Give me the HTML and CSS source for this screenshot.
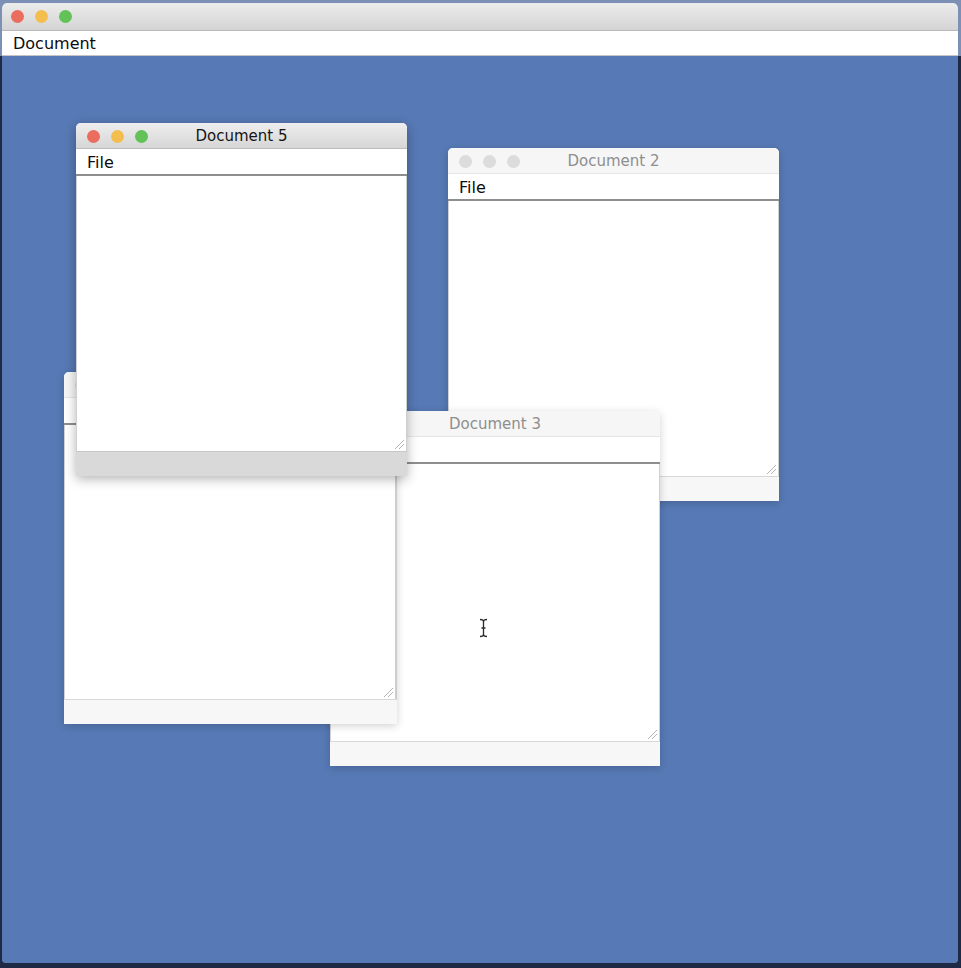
FILE: index.html
```html
<!DOCTYPE html>
<html>
<head>
<meta charset="utf-8">
<link rel="stylesheet" href="styles.css">
</head>
<body>
<div class="app">
  <div class="app-titlebar">
    <span class="light red"></span><span class="light yellow"></span><span class="light green"></span>
  </div>
  <div class="app-menubar"><span class="menu-item">Document</span></div>
  <div class="desktop">
    <div class="win win-doc2 inactive">
      <div class="titlebar">
        <div class="lights"><span class="light"></span><span class="light"></span><span class="light"></span></div>
        <div class="title">Document 2</div>
        <div></div>
      </div>
      <div class="menubar">File</div>
      <div class="content">
        <svg class="grip" width="11" height="11" viewBox="0 0 11 11"><path d="M1 10 L10 1 M5 10 L10 5" stroke="#b5b5b5" stroke-width="1"/></svg>
      </div>
      <div class="statusbar"></div>
    </div>

    <div class="win win-doc3 inactive">
      <div class="titlebar">
        <div class="lights"><span class="light"></span><span class="light"></span><span class="light"></span></div>
        <div class="title">Document 3</div>
        <div></div>
      </div>
      <div class="menubar">File</div>
      <div class="content">
        <svg class="grip" width="11" height="11" viewBox="0 0 11 11"><path d="M1 10 L10 1 M5 10 L10 5" stroke="#b5b5b5" stroke-width="1"/></svg>
      </div>
      <div class="statusbar"></div>
    </div>

    <div class="win win-doc4 inactive">
      <div class="titlebar">
        <div class="lights"><span class="light"></span><span class="light"></span><span class="light"></span></div>
        <div class="title">Document 4</div>
        <div></div>
      </div>
      <div class="menubar">File</div>
      <div class="content">
        <svg class="grip" width="11" height="11" viewBox="0 0 11 11"><path d="M1 10 L10 1 M5 10 L10 5" stroke="#b5b5b5" stroke-width="1"/></svg>
      </div>
      <div class="statusbar"></div>
    </div>

    <div class="win win-doc5 active">
      <div class="titlebar">
        <div class="lights"><span class="light red"></span><span class="light yellow"></span><span class="light green"></span></div>
        <div class="title">Document 5</div>
        <div></div>
      </div>
      <div class="menubar">File</div>
      <div class="content">
        <svg class="grip" width="11" height="11" viewBox="0 0 11 11"><path d="M1 10 L10 1 M5 10 L10 5" stroke="#b5b5b5" stroke-width="1"/></svg>
      </div>
      <div class="statusbar"></div>
    </div>

    <svg class="ibeam" width="11" height="20" viewBox="0 0 11 20">
      <path d="M2 1.5 Q5.5 1.5 5.5 3.5 Q5.5 1.5 9 1.5 M5.5 3.5 V16.5 M2 18.5 Q5.5 18.5 5.5 16.5 Q5.5 18.5 9 18.5 M3.5 10 H7.5" stroke="#2a2a2a" stroke-width="1.3" fill="none"/>
    </svg>
  </div>
</div>
</body>
</html>
```

FILE: styles.css
```css
html, body {
  margin: 0;
  padding: 0;
}
body {
  width: 961px;
  height: 968px;
  overflow: hidden;
  background: linear-gradient(to bottom, #7c8fb4 0, #7c8fb4 56px, #1e2a46 56px);
  font-family: "DejaVu Sans", "Noto Sans", sans-serif;
}
.app {
  margin: 3px 0 0 2px;
  width: 956px;
  height: 960px;
  display: flex;
  flex-direction: column;
  border-radius: 5px 5px 4px 4px;
  overflow: hidden;
  background: #5779b5;
}
.app-titlebar {
  height: 27px;
  flex: none;
  display: flex;
  align-items: center;
  gap: 11px;
  padding-left: 9px;
  background: linear-gradient(to bottom, #ececec, #d4d4d4);
  border-bottom: 1px solid #b8b8b8;
}
.light {
  width: 13px;
  height: 13px;
  border-radius: 50%;
  display: block;
  background: #dcdcdc;
}
.light.red { background: #ea6d5e; }
.light.yellow { background: #f3be4e; }
.light.green { background: #62c257; }
.app-menubar {
  height: 24px;
  flex: none;
  background: #ffffff;
  border-bottom: 1px solid #c4c4c4;
  padding-left: 11px;
  font-size: 16px;
  line-height: 26px;
  color: #0c0c0c;
}
.desktop {
  flex: 1;
  position: relative;
  background: #5779b5;
}
.win {
  position: absolute;
  display: flex;
  flex-direction: column;
  background: #ffffff;
  border-radius: 5px 5px 0 0;
  box-shadow: 0 2px 8px rgba(0, 0, 0, 0.18);
}
.win-doc2 { left: 446px; top: 92px; width: 331px; height: 353px; }
.win-doc3 { left: 328px; top: 355px; width: 330px; height: 355px; }
.win-doc4 { left: 62px; top: 316px; width: 333px; height: 352px; }
.win-doc5 { left: 74px; top: 67px; width: 331px; height: 353px; box-shadow: 0 3px 12px rgba(0, 0, 0, 0.3); }

.titlebar {
  height: 25px;
  flex: none;
  display: grid;
  grid-template-columns: 1fr auto 1fr;
  align-items: center;
  border-radius: 5px 5px 0 0;
  background: #f6f6f6;
  border-bottom: 1px solid #e6e6e6;
}
.active .titlebar {
  background: linear-gradient(to bottom, #eeeeee, #d6d6d6);
  border-bottom: 1px solid #bcbcbc;
}
.lights {
  display: flex;
  gap: 11px;
  padding-left: 11px;
}
.title {
  font-size: 15px;
  line-height: 26px;
  color: #8e8e8e;
  white-space: nowrap;
}
.active .title { color: #151515; }
.menubar {
  height: 25px;
  flex: none;
  border-bottom: 2px solid #8e8e8e;
  padding-left: 11px;
  font-size: 16px;
  line-height: 27px;
  color: #0c0c0c;
}
.content {
  flex: 1;
  position: relative;
  border-left: 1px solid #d0d0d0;
  border-right: 1px solid #d0d0d0;
}
.grip {
  position: absolute;
  right: 1px;
  bottom: 1px;
}
.statusbar {
  height: 24px;
  flex: none;
  border-top: 1px solid #d8d8d8;
  background: #f7f7f7;
}
.win-doc5 .statusbar {
  background: #d9d9d9;
  border-top-color: #c8c8c8;
}
.win-doc4 .content {
  border-right: 2px solid #cdcdcd;
}
.ibeam {
  position: absolute;
  left: 476px;
  top: 562px;
}
```
